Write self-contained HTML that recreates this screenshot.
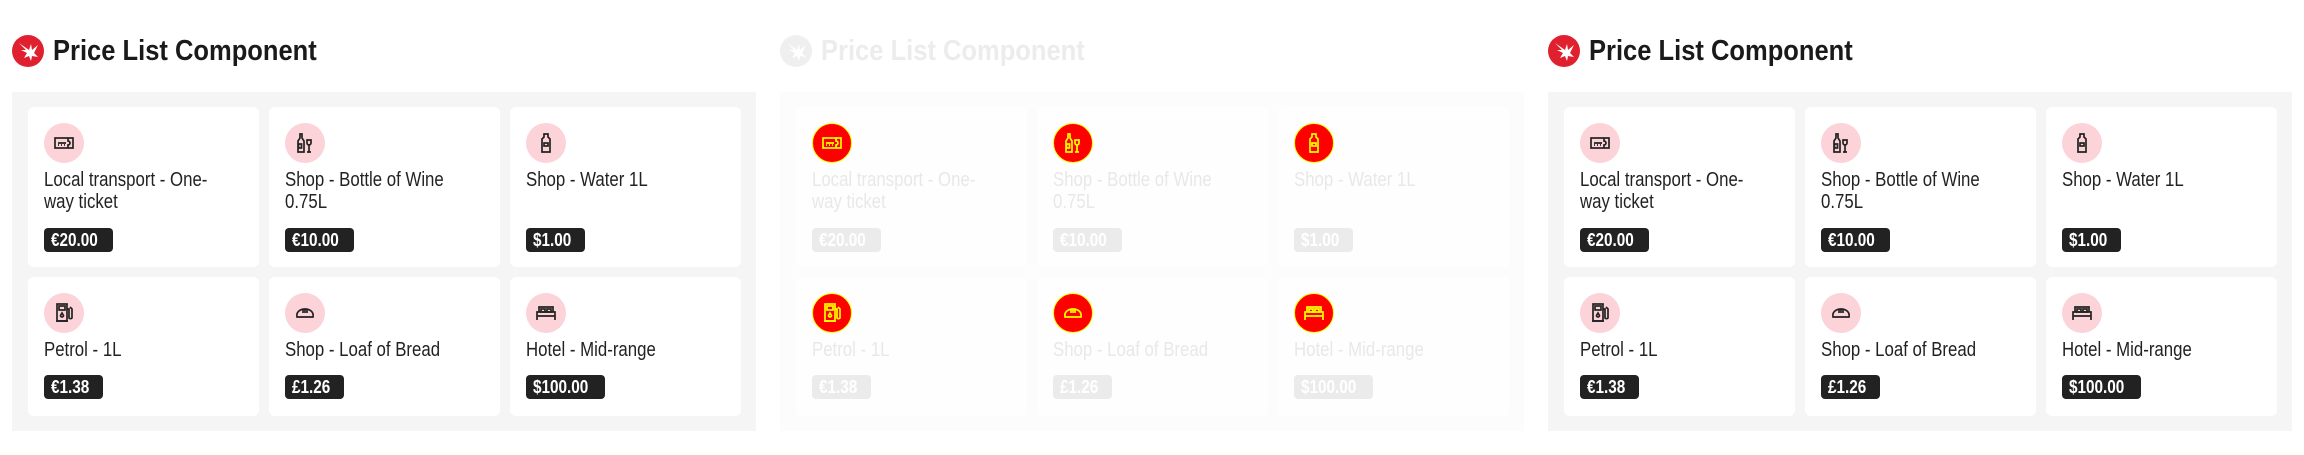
<!DOCTYPE html>
<html><head><meta charset="utf-8"><style>
*{margin:0;padding:0;box-sizing:border-box}
body{width:2304px;height:455px;background:#fff;position:relative;overflow:hidden;font-family:"Liberation Sans",sans-serif;color:#222}
.p{position:absolute;top:0;width:768px;height:455px}
.logo{position:absolute;left:12px;top:35px;width:32px;height:32px;border-radius:50%;background:#e0202e}
.title{position:absolute;left:53px;top:35px;font-size:29px;font-weight:bold;white-space:nowrap;transform:scaleX(0.88);transform-origin:left top;color:#1a1a1a}
.bg{position:absolute;left:12px;top:92px;width:744px;height:339px;background:#f5f5f5}
.c{position:absolute;width:231px;background:#fff;border-radius:6px}
.r1{top:107px;height:160px}.r2{top:277px;height:139px}
.x1{left:28px}.x2{left:269px}.x3{left:510px}
.ic{position:absolute;left:16px;top:16px;width:40px;height:40px;border-radius:50%;background:#fbd3d8}
.ic svg{position:absolute;left:8px;top:8px;width:24px;height:24px;fill:none;stroke:#222;stroke-width:1.7}
.t{position:absolute;left:16px;top:62px;font-size:20px;line-height:22px;white-space:nowrap;transform:scaleX(0.84);transform-origin:left top}
.b{position:absolute;left:16px;height:24px;line-height:24px;padding:0 7px;background:#222;color:#fff;border-radius:4px;font-size:18px;font-weight:bold}
.b span{display:inline-block;transform:scaleX(0.85);transform-origin:left}
.r1 .b{top:121px}.r2 .b{top:98px}
.hc .title{color:#ececec}.hc .logo{background:#efefef}
.hc .bg{background:#fcfcfc}.hc .c{background:#fefefe}.hc .t{color:#e8e8e8}.hc .b{background:#ebebeb}
.hc .ic{background:#f00;border:1.5px solid #ff0}
.hc .ic svg{stroke:#ff0;left:6.5px;top:6.5px}
</style></head><body>

<div class="p" style="left:0">
<div class="logo"><svg width="32" height="32" viewBox="0 0 32 32"><path d="M7 8l7 7-5 0 6 3-3 5 5-2 2 5 1-5 6 1-4-4 4-8-6 5-1-6-2 6z" fill="#fff"/></svg></div>
<div class="title">Price List Component</div>
<div class="bg"></div>
<div class="c r1 x1"><div class="ic"><svg viewBox="0 0 24 24"><rect x="3" y="7" width="18" height="10"/><path d="M16 7v3a2 2 0 0 1 0 4v3"/><path d="M6 12h8M6 14h1M9 14h1M12 14h1"/></svg></div><div class="t">Local transport - One-<br>way ticket</div><div class="b"><span>€20.00</span></div></div>
<div class="c r1 x2"><div class="ic"><svg viewBox="0 0 24 24"><path d="M7 3h2v4l2 3v11H5V10l2-3z"/><rect x="5.5" y="13" width="3" height="4"/><path d="M14 9h4v3a2 2 0 0 1-4 0zM16 14v7M14 21h4"/></svg></div><div class="t">Shop - Bottle of Wine<br>0.75L</div><div class="b"><span>€10.00</span></div></div>
<div class="c r1 x3"><div class="ic"><svg viewBox="0 0 24 24"><path d="M10 3h4v3l2 2v13H8V8l2-2z"/><rect x="10" y="12" width="4" height="3"/></svg></div><div class="t">Shop - Water 1L</div><div class="b"><span>$1.00</span></div></div>
<div class="c r2 x1"><div class="ic"><svg viewBox="0 0 24 24"><rect x="5" y="3" width="10" height="17"/><rect x="7" y="5" width="6" height="4"/><path d="M4 20h12M15 8h2v9a2 2 0 0 0 3 0V8l-2-2M10 12l-1.5 2.5a1.5 1.5 0 0 0 3 0z"/></svg></div><div class="t">Petrol - 1L</div><div class="b"><span>€1.38</span></div></div>
<div class="c r2 x2"><div class="ic"><svg viewBox="0 0 24 24"><path d="M4 16c-1-5 3-8 8-8s9 3 8 8z"/><path d="M10 9v3M12 8.5v3.5M14 9v3"/></svg></div><div class="t">Shop - Loaf of Bread</div><div class="b"><span>£1.26</span></div></div>
<div class="c r2 x3"><div class="ic"><svg viewBox="0 0 24 24"><path d="M5 11V6h14v5M3 19v-8h18v8M3 15h18"/><rect x="7" y="8" width="4" height="3"/><rect x="13" y="8" width="4" height="3"/></svg></div><div class="t">Hotel - Mid-range</div><div class="b"><span>$100.00</span></div></div>
</div>

<div class="p hc" style="left:768px">
<div class="logo"><svg width="32" height="32" viewBox="0 0 32 32"><path d="M7 8l7 7-5 0 6 3-3 5 5-2 2 5 1-5 6 1-4-4 4-8-6 5-1-6-2 6z" fill="#fff"/></svg></div>
<div class="title">Price List Component</div>
<div class="bg"></div>
<div class="c r1 x1"><div class="ic"><svg viewBox="0 0 24 24"><rect x="3" y="7" width="18" height="10"/><path d="M16 7v3a2 2 0 0 1 0 4v3"/><path d="M6 12h8M6 14h1M9 14h1M12 14h1"/></svg></div><div class="t">Local transport - One-<br>way ticket</div><div class="b"><span>€20.00</span></div></div>
<div class="c r1 x2"><div class="ic"><svg viewBox="0 0 24 24"><path d="M7 3h2v4l2 3v11H5V10l2-3z"/><rect x="5.5" y="13" width="3" height="4"/><path d="M14 9h4v3a2 2 0 0 1-4 0zM16 14v7M14 21h4"/></svg></div><div class="t">Shop - Bottle of Wine<br>0.75L</div><div class="b"><span>€10.00</span></div></div>
<div class="c r1 x3"><div class="ic"><svg viewBox="0 0 24 24"><path d="M10 3h4v3l2 2v13H8V8l2-2z"/><rect x="10" y="12" width="4" height="3"/></svg></div><div class="t">Shop - Water 1L</div><div class="b"><span>$1.00</span></div></div>
<div class="c r2 x1"><div class="ic"><svg viewBox="0 0 24 24"><rect x="5" y="3" width="10" height="17"/><rect x="7" y="5" width="6" height="4"/><path d="M4 20h12M15 8h2v9a2 2 0 0 0 3 0V8l-2-2M10 12l-1.5 2.5a1.5 1.5 0 0 0 3 0z"/></svg></div><div class="t">Petrol - 1L</div><div class="b"><span>€1.38</span></div></div>
<div class="c r2 x2"><div class="ic"><svg viewBox="0 0 24 24"><path d="M4 16c-1-5 3-8 8-8s9 3 8 8z"/><path d="M10 9v3M12 8.5v3.5M14 9v3"/></svg></div><div class="t">Shop - Loaf of Bread</div><div class="b"><span>£1.26</span></div></div>
<div class="c r2 x3"><div class="ic"><svg viewBox="0 0 24 24"><path d="M5 11V6h14v5M3 19v-8h18v8M3 15h18"/><rect x="7" y="8" width="4" height="3"/><rect x="13" y="8" width="4" height="3"/></svg></div><div class="t">Hotel - Mid-range</div><div class="b"><span>$100.00</span></div></div>
</div>

<div class="p" style="left:1536px">
<div class="logo"><svg width="32" height="32" viewBox="0 0 32 32"><path d="M7 8l7 7-5 0 6 3-3 5 5-2 2 5 1-5 6 1-4-4 4-8-6 5-1-6-2 6z" fill="#fff"/></svg></div>
<div class="title">Price List Component</div>
<div class="bg"></div>
<div class="c r1 x1"><div class="ic"><svg viewBox="0 0 24 24"><rect x="3" y="7" width="18" height="10"/><path d="M16 7v3a2 2 0 0 1 0 4v3"/><path d="M6 12h8M6 14h1M9 14h1M12 14h1"/></svg></div><div class="t">Local transport - One-<br>way ticket</div><div class="b"><span>€20.00</span></div></div>
<div class="c r1 x2"><div class="ic"><svg viewBox="0 0 24 24"><path d="M7 3h2v4l2 3v11H5V10l2-3z"/><rect x="5.5" y="13" width="3" height="4"/><path d="M14 9h4v3a2 2 0 0 1-4 0zM16 14v7M14 21h4"/></svg></div><div class="t">Shop - Bottle of Wine<br>0.75L</div><div class="b"><span>€10.00</span></div></div>
<div class="c r1 x3"><div class="ic"><svg viewBox="0 0 24 24"><path d="M10 3h4v3l2 2v13H8V8l2-2z"/><rect x="10" y="12" width="4" height="3"/></svg></div><div class="t">Shop - Water 1L</div><div class="b"><span>$1.00</span></div></div>
<div class="c r2 x1"><div class="ic"><svg viewBox="0 0 24 24"><rect x="5" y="3" width="10" height="17"/><rect x="7" y="5" width="6" height="4"/><path d="M4 20h12M15 8h2v9a2 2 0 0 0 3 0V8l-2-2M10 12l-1.5 2.5a1.5 1.5 0 0 0 3 0z"/></svg></div><div class="t">Petrol - 1L</div><div class="b"><span>€1.38</span></div></div>
<div class="c r2 x2"><div class="ic"><svg viewBox="0 0 24 24"><path d="M4 16c-1-5 3-8 8-8s9 3 8 8z"/><path d="M10 9v3M12 8.5v3.5M14 9v3"/></svg></div><div class="t">Shop - Loaf of Bread</div><div class="b"><span>£1.26</span></div></div>
<div class="c r2 x3"><div class="ic"><svg viewBox="0 0 24 24"><path d="M5 11V6h14v5M3 19v-8h18v8M3 15h18"/><rect x="7" y="8" width="4" height="3"/><rect x="13" y="8" width="4" height="3"/></svg></div><div class="t">Hotel - Mid-range</div><div class="b"><span>$100.00</span></div></div>
</div>

</body></html>
